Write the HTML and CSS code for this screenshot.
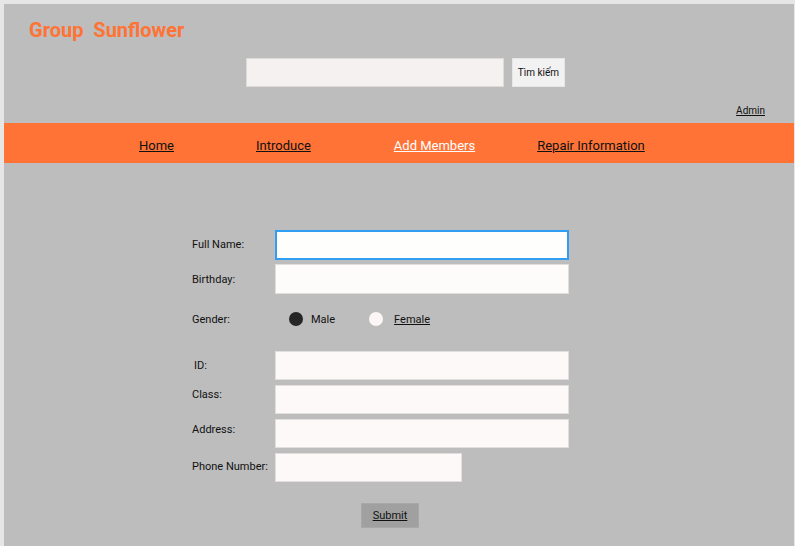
FILE: index.html
```html
<!DOCTYPE html>
<html>
<head>
<meta charset="utf-8">
<link rel="stylesheet" href="styles.css">
</head>
<body>
<div class="page">
  <header class="header">
    <h1 class="brand">Group&nbsp; Sunflower</h1>
    <div class="search">
      <input class="search-input" type="text">
      <button class="search-btn">Tìm kiếm</button>
    </div>
    <div class="user-row"><a class="admin" href="#">Admin</a></div>
  </header>
  <nav class="nav">
    <a class="nav-link home" href="#">Home</a>
    <a class="nav-link intro" href="#">Introduce</a>
    <a class="nav-link active add" href="#">Add Members</a>
    <a class="nav-link repair" href="#">Repair Information</a>
  </nav>
  <form class="form">
    <div class="row r-name">
      <label class="label">Full Name:</label>
      <input class="field focus" type="text">
    </div>
    <div class="row r-birth">
      <label class="label">Birthday:</label>
      <input class="field" type="text">
    </div>
    <div class="row r-gender">
      <label class="label">Gender:</label>
      <span class="radio checked"></span><span class="opt">Male</span>
      <span class="radio second"></span><span class="opt u">Female</span>
    </div>
    <div class="row r-id">
      <label class="label ind">ID:</label>
      <input class="field" type="text">
    </div>
    <div class="row">
      <label class="label up">Class:</label>
      <input class="field" type="text">
    </div>
    <div class="row">
      <label class="label up4">Address:</label>
      <input class="field" type="text">
    </div>
    <div class="row">
      <label class="label up1">Phone Number:</label>
      <input class="field short" type="text">
    </div>
    <div class="actions">
      <button class="submit" type="button">Submit</button>
    </div>
  </form>
</div>
</body>
</html>
```
FILE: styles.css
```css
html, body {
  margin: 0;
  padding: 0;
  height: 100%;
}
body {
  background: #e6e6e6;
  font-family: Roboto, "Noto Sans", sans-serif;
  padding: 4px 1px 0 4px;
  box-sizing: border-box;
  overflow: hidden;
}
.page {
  background: #bdbdbd;
  height: 100%;
  color: #111;
}
.header {
  padding: 15px 0 0 0;
}
.brand {
  margin: 0 0 0 25px;
  font-size: 20px;
  line-height: 23px;
  font-weight: 700;
  color: #ff7335;
}
.search {
  display: flex;
  gap: 8px;
  margin: 16px 0 0 242px;
}
.search-input {
  width: 258px;
  height: 29px;
  box-sizing: border-box;
  background: #f5f1f1;
  border: 1px solid #dedada;
  margin: 0;
  padding: 0;
}
.search-btn {
  width: 53px;
  height: 29px;
  box-sizing: border-box;
  background: #f2f2f2;
  border: 1px solid #e6e6e6;
  font-family: Roboto, sans-serif;
  font-size: 10px;
  color: #111;
  padding: 0;
}
.user-row {
  display: flex;
  justify-content: flex-end;
  padding: 17px 29px 0 0;
  height: 19px;
}
.admin {
  color: #111;
  font-size: 10px;
  line-height: 13px;
}
.nav {
  background: #ff7337;
  height: 40px;
  box-sizing: border-box;
  padding-top: 4px;
  display: flex;
  align-items: center;
  font-size: 13px;
}
.nav-link {
  color: #111;
  text-decoration: underline;
}
.nav-link.active {
  color: #fff;
}
.home { margin-left: 135px; }
.intro { margin-left: 82px; }
.add { margin-left: 83px; }
.repair { margin-left: 62px; }
.form {
  padding: 67px 0 0 188px;
  font-size: 11px;
}
.row {
  display: flex;
  align-items: center;
  margin-bottom: 5px;
}
.label {
  width: 83px;
  flex: none;
}
.label.ind { padding-left: 2px; width: 81px; }
.label.up { position: relative; top: -5px; }
.label.up4 { position: relative; top: -4px; }
.label.up1 { position: relative; top: -1px; }
.r-name .label { position: relative; top: -1px; }
.field {
  width: 294px;
  height: 29px;
  box-sizing: border-box;
  margin: 0;
  padding: 0;
  background: #fdf9f9;
  border: 1px solid #e2dede;
}
.field.short { width: 187px; }
.r-name { margin-bottom: 4px; }
.r-name .field {
  height: 30px;
  border: 2px solid #2f9ef3;
  background: #fefefd;
}
.r-birth .field {
  height: 30px;
  background: #fdfcfb;
}
.r-gender {
  height: 14px;
  margin: 18px 0 25px 0;
}
.radio {
  width: 14px;
  height: 14px;
  border-radius: 50%;
  background: #fcf6f6;
  margin-right: 8px;
}
.radio.checked {
  background: #262626;
  margin-left: 14px;
}
.radio.second { margin-right: 11px; }
.opt { margin-right: 34px; }
.opt.u { text-decoration: underline; }
.actions {
  padding: 16px 0 0 169px;
}
.submit {
  width: 58px;
  height: 25px;
  background: #a0a0a0;
  border: 1px solid #a8a8a8;
  font-family: Roboto, sans-serif;
  font-size: 11px;
  text-decoration: underline;
  color: #111;
  padding: 0;
}
```
